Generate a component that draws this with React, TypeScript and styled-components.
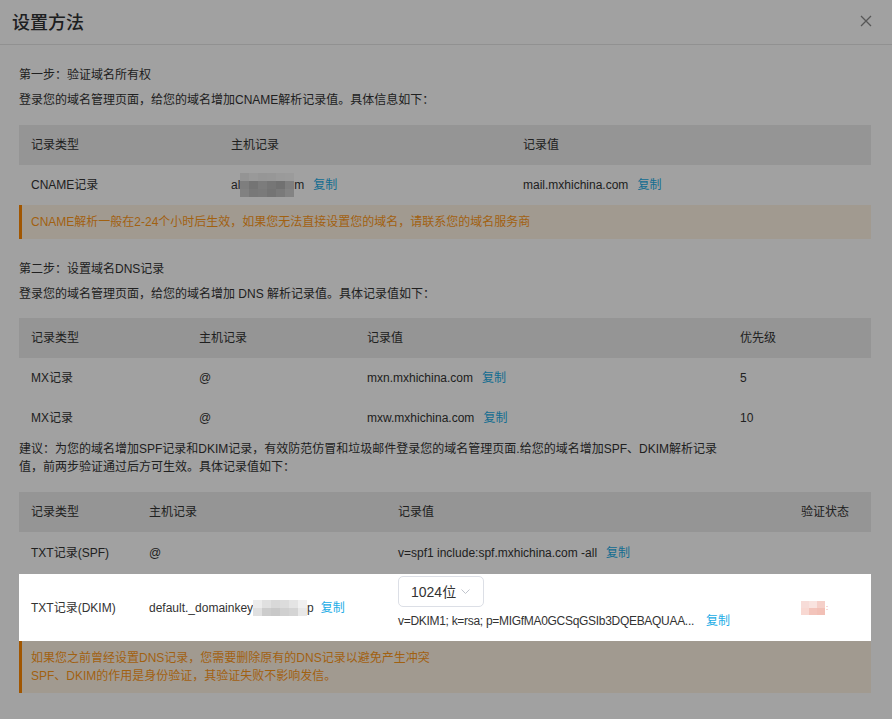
import React from 'react'
import styled, { createGlobalStyle } from 'styled-components'

const GlobalStyle = createGlobalStyle`
  html, body {
    margin: 0;
    padding: 0;
    background: #fff;
  }
  body {
    font-family: "Liberation Sans", "Noto Sans CJK SC", sans-serif;
    font-size: 12px;
    color: #333;
  }
  * {
    box-sizing: border-box;
  }
`

const Modal = styled.div`
  width: 892px;
  min-height: 719px;
  background: #fff;
`

const Header = styled.div`
  height: 45px;
  display: flex;
  align-items: center;
  justify-content: space-between;
  padding: 0 20px 3px 12px;
  border-bottom: 1px solid #e6e6e6;
`

const Title = styled.h2`
  margin: 0;
  font-family: "Noto Sans CJK SC", sans-serif;
  font-size: 18px;
  font-weight: 500;
  line-height: 24px;
  color: #303133;
`

const CloseButton = styled.button`
  width: 12px;
  height: 12px;
  padding: 0;
  border: 0;
  background: none;
  display: flex;
  cursor: pointer;
`

const Body = styled.div`
  padding: 21px 21px 25px 19px;
`

const Para = styled.p<{ $mt?: number }>`
  margin: ${({ $mt = 0 }) => $mt}px 0 0;
  line-height: 18px;
`

const Table = styled.div<{ $mt: number }>`
  margin-top: ${({ $mt }) => $mt}px;
  display: flex;
  flex-direction: column;
`

const Row = styled.div<{ $cols: string; $h?: number; $head?: boolean }>`
  display: grid;
  grid-template-columns: ${({ $cols }) => $cols};
  align-items: center;
  min-height: ${({ $h = 40 }) => $h}px;
  line-height: 18px;
  background: ${({ $head }) => ($head ? '#ececec' : 'transparent')};
`

const SpotRow = styled(Row)`
  position: relative;
  z-index: 1;
  background: #fff;
  box-shadow: 0 0 0 2400px rgba(0, 0, 0, 0.37);
`

const Cell = styled.div`
  padding: 0 12px;
  display: flex;
  align-items: center;
  white-space: nowrap;
`

const ValueCell = styled.div`
  padding: 2px 12px 11px;
  display: flex;
  flex-direction: column;
  align-items: flex-start;
  gap: 5px;
  white-space: nowrap;
`

const ValueLine = styled.div`
  display: flex;
  align-items: center;
  line-height: 18px;
`

const KeyText = styled.span`
  letter-spacing: -0.3px;
`

const Copy = styled.a<{ $ml?: number }>`
  margin-left: ${({ $ml = 9 }) => $ml}px;
  color: #22ade6;
  cursor: pointer;
`

const Mosaic = styled.span<{ $cols: number; $size: number }>`
  display: inline-grid;
  grid-template-columns: repeat(${({ $cols }) => $cols}, ${({ $size }) => $size}px);
  grid-auto-rows: ${({ $size }) => $size - 1}px;
`

const Tile = styled.span<{ $c: string }>`
  background: ${({ $c }) => $c};
`

const StatusMark = styled.span`
  margin-left: 1px;
  font-size: 8px;
  line-height: 8px;
  color: #ee7a6c;
`

const Banner = styled.div`
  border-left: 3px solid #ff8800;
  background: #fff4e5;
  color: #ff9a1a;
  padding: 8px 9px;
  line-height: 18px;
`

const Select = styled.div`
  width: 86px;
  height: 31px;
  display: flex;
  align-items: center;
  justify-content: space-between;
  padding: 0 13px 0 12px;
  border: 1px solid #dcdfe6;
  border-radius: 5px;
  font-size: 14px;
  color: #333;
`

const HOST_TILES = [
  '#ebebeb', '#f2f2f2', '#eeeeee', '#f0f0f0', '#f4f4f4', '#f6f6f6',
  '#c8c8c8', '#b8b8b8', '#c4c4c4', '#bcbcbc', '#b4b4b4', '#c9c9c9',
  '#cccccc', '#bebebe', '#c2c2c2', '#b8b8b8', '#c2c2c2', '#d0d0d0',
]

const DKIM_TILES = [
  '#ececec', '#e0e0e0', '#d8d8d8', '#dcdcdc', '#e4e4e4', '#f0f0f0',
  '#e0e0e0', '#cccccc', '#c8c8c8', '#d0d0d0', '#d4d4d4', '#e8e8e8',
]

const STATUS_TILES = ['#f7dcd8', '#f9e3df', '#f5cfc8', '#f8d8d2', '#f3c4bb', '#f2c0b6']

const T1 = '200px 292px 1fr'
const T2 = '168px 168px 373px 1fr'
const T3 = '118px 249px 403px 1fr'

const Blur: React.FC<{ tiles: string[]; cols: number; size: number }> = ({ tiles, cols, size }) => (
  <Mosaic $cols={cols} $size={size}>
    {tiles.map((c, i) => (
      <Tile key={i} $c={c} />
    ))}
  </Mosaic>
)

const App: React.FC = () => {
  return (
    <>
      <GlobalStyle />
      <Modal>
        <Header>
          <Title>设置方法</Title>
          <CloseButton aria-label="close">
            <svg width="12" height="12" viewBox="0 0 12 12">
              <path d="M1 1L11 11M11 1L1 11" stroke="#8a8a8a" strokeWidth="1.3" />
            </svg>
          </CloseButton>
        </Header>

        <Body>
          <Para>第一步：验证域名所有权</Para>
          <Para $mt={7}>登录您的域名管理页面，给您的域名增加CNAME解析记录值。具体信息如下：</Para>

          <Table $mt={16}>
            <Row $cols={T1} $head>
              <Cell>记录类型</Cell>
              <Cell>主机记录</Cell>
              <Cell>记录值</Cell>
            </Row>
            <Row $cols={T1}>
              <Cell>CNAME记录</Cell>
              <Cell>
                al
                <Blur tiles={HOST_TILES} cols={6} size={9} />m<Copy>复制</Copy>
              </Cell>
              <Cell>
                mail.mxhichina.com<Copy>复制</Copy>
              </Cell>
            </Row>
          </Table>
          <Banner>CNAME解析一般在2-24个小时后生效，如果您无法直接设置您的域名，请联系您的域名服务商</Banner>

          <Para $mt={21}>第二步：设置域名DNS记录</Para>
          <Para $mt={7}>登录您的域名管理页面，给您的域名增加 DNS 解析记录值。具体记录值如下：</Para>

          <Table $mt={15}>
            <Row $cols={T2} $head>
              <Cell>记录类型</Cell>
              <Cell>主机记录</Cell>
              <Cell>记录值</Cell>
              <Cell>优先级</Cell>
            </Row>
            <Row $cols={T2}>
              <Cell>MX记录</Cell>
              <Cell>@</Cell>
              <Cell>
                mxn.mxhichina.com<Copy>复制</Copy>
              </Cell>
              <Cell>5</Cell>
            </Row>
            <Row $cols={T2}>
              <Cell>MX记录</Cell>
              <Cell>@</Cell>
              <Cell>
                mxw.mxhichina.com<Copy>复制</Copy>
              </Cell>
              <Cell>10</Cell>
            </Row>
          </Table>

          <Para $mt={2}>
            建议：为您的域名增加SPF记录和DKIM记录，有效防范仿冒和垃圾邮件登录您的域名管理页面.给您的域名增加SPF、DKIM解析记录
            <br />
            值，前两步验证通过后方可生效。具体记录值如下：
          </Para>

          <Table $mt={16}>
            <Row $cols={T3} $head>
              <Cell>记录类型</Cell>
              <Cell>主机记录</Cell>
              <Cell>记录值</Cell>
              <Cell>验证状态</Cell>
            </Row>
            <Row $cols={T3} $h={42}>
              <Cell>TXT记录(SPF)</Cell>
              <Cell>@</Cell>
              <Cell>
                v=spf1 include:spf.mxhichina.com -all<Copy>复制</Copy>
              </Cell>
              <Cell />
            </Row>
            <SpotRow $cols={T3} $h={67}>
              <Cell>TXT记录(DKIM)</Cell>
              <Cell>
                default._domainkey
                <Blur tiles={DKIM_TILES} cols={6} size={9} />p<Copy $ml={7}>复制</Copy>
              </Cell>
              <ValueCell>
                <Select>
                  1024位
                  <svg width="9" height="5" viewBox="0 0 9 5">
                    <path d="M0.5 0.5L4.5 4.5L8.5 0.5" fill="none" stroke="#c0c4cc" strokeWidth="1" />
                  </svg>
                </Select>
                <ValueLine>
                  <KeyText>v=DKIM1; k=rsa; p=MIGfMA0GCSqGSIb3DQEBAQUAA...</KeyText>
                  <Copy $ml={12}>复制</Copy>
                </ValueLine>
              </ValueCell>
              <Cell>
                <Blur tiles={STATUS_TILES} cols={3} size={8} />
                <StatusMark>:</StatusMark>
              </Cell>
            </SpotRow>
          </Table>
          <Banner>
            如果您之前曾经设置DNS记录，您需要删除原有的DNS记录以避免产生冲突
            <br />
            SPF、DKIM的作用是身份验证，其验证失败不影响发信。
          </Banner>
        </Body>
      </Modal>
    </>
  )
}

export default App
